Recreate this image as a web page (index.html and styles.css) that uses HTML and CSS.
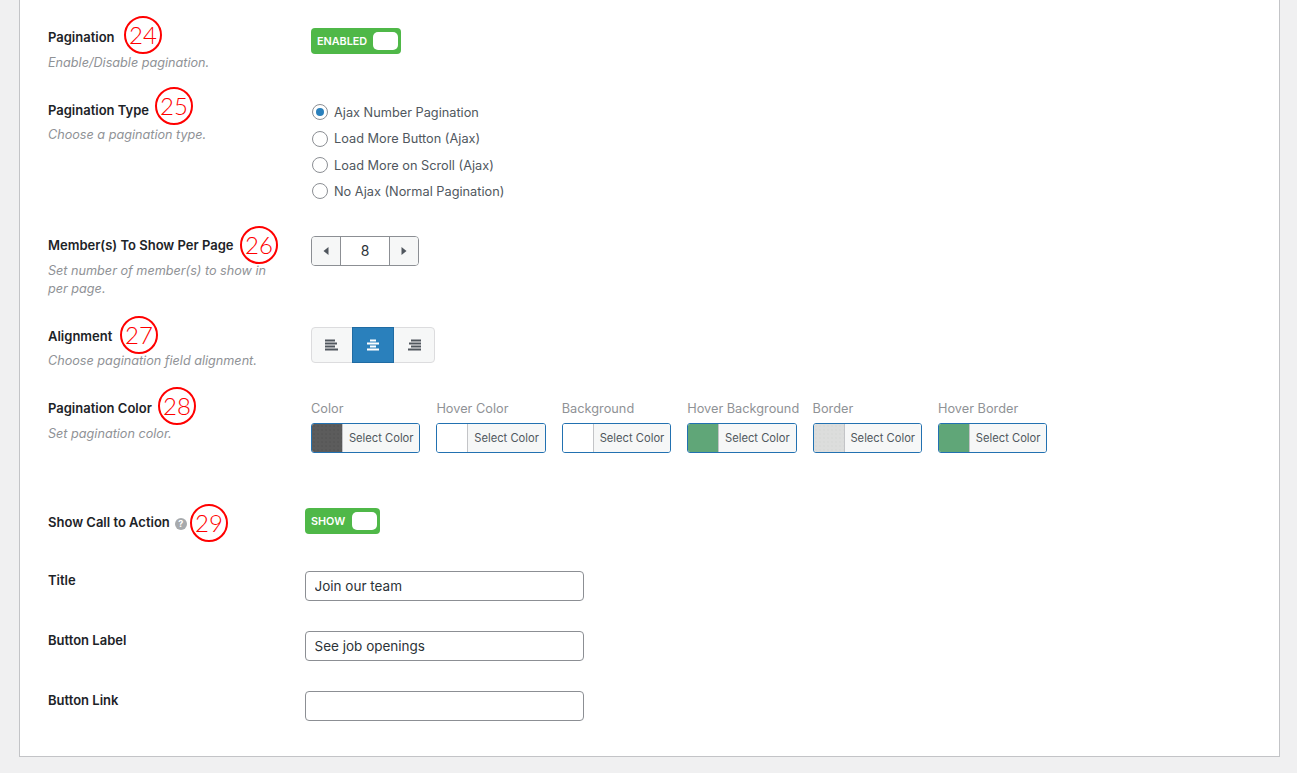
FILE: index.html
```html
<!DOCTYPE html>
<html lang="en">
<head>
<meta charset="utf-8">
<title>Pagination settings</title>
<link rel="stylesheet" href="styles.css">
</head>
<body>
<main class="panel">
  <section class="row row-pagination">
    <div class="info">
      <h3 class="label"><span class="label-text">Pagination<span class="mark mark-24">24</span></span></h3>
      <p class="desc">Enable/Disable pagination.</p>
    </div>
    <div class="control">
      <div class="toggle toggle-enabled"><span class="toggle-text">ENABLED</span><span class="knob"></span></div>
    </div>
  </section>

  <section class="row row-type">
    <div class="info">
      <h3 class="label"><span class="label-text">Pagination Type<span class="mark mark-25">25</span></span></h3>
      <p class="desc">Choose a pagination type.</p>
    </div>
    <div class="control radios">
      <div class="radio-line"><span class="radio radio-on"></span>Ajax Number Pagination</div>
      <div class="radio-line"><span class="radio"></span>Load More Button (Ajax)</div>
      <div class="radio-line"><span class="radio"></span>Load More on Scroll (Ajax)</div>
      <div class="radio-line"><span class="radio"></span>No Ajax (Normal Pagination)</div>
    </div>
  </section>

  <section class="row row-members">
    <div class="info">
      <h3 class="label"><span class="label-text">Member(s) To Show Per Page<span class="mark mark-26">26</span></span></h3>
      <p class="desc">Set number of member(s) to show in per page.</p>
    </div>
    <div class="control">
      <div class="stepper">
        <span class="step"><svg width="6" height="10" viewBox="0 0 6 10"><path d="M5.5 1v8L.5 5z"/></svg></span>
        <span class="step-value">8</span>
        <span class="step"><svg width="6" height="10" viewBox="0 0 6 10"><path d="M.5 1v8l5-4z"/></svg></span>
      </div>
    </div>
  </section>

  <section class="row row-align">
    <div class="info">
      <h3 class="label"><span class="label-text">Alignment<span class="mark mark-27">27</span></span></h3>
      <p class="desc">Choose pagination field alignment.</p>
    </div>
    <div class="control">
      <div class="aligns">
        <span class="align"><svg width="14" height="12" viewBox="0 0 14 12"><path d="M0 1.5h10M0 4.5h12M0 7.5h10M0 10.5h13"/></svg></span>
        <span class="align align-on"><svg width="14" height="12" viewBox="0 0 14 12"><path d="M4 1.5h6M1 4.5h12M4 7.5h6M1 10.5h12"/></svg></span>
        <span class="align"><svg width="14" height="12" viewBox="0 0 14 12"><path d="M4 1.5h10M2 4.5h12M4 7.5h10M1 10.5h13"/></svg></span>
      </div>
    </div>
  </section>

  <section class="row row-color">
    <div class="info">
      <h3 class="label"><span class="label-text">Pagination Color<span class="mark mark-28">28</span></span></h3>
      <p class="desc">Set pagination color.</p>
    </div>
    <div class="control colors">
      <div class="color"><div class="color-name">Color</div><div class="picker"><span class="swatch swatch-dark"></span><span class="pick">Select Color</span></div></div>
      <div class="color"><div class="color-name">Hover Color</div><div class="picker"><span class="swatch"></span><span class="pick">Select Color</span></div></div>
      <div class="color"><div class="color-name">Background</div><div class="picker"><span class="swatch"></span><span class="pick">Select Color</span></div></div>
      <div class="color"><div class="color-name">Hover Background</div><div class="picker"><span class="swatch swatch-green"></span><span class="pick">Select Color</span></div></div>
      <div class="color"><div class="color-name">Border</div><div class="picker"><span class="swatch swatch-grey"></span><span class="pick">Select Color</span></div></div>
      <div class="color"><div class="color-name">Hover Border</div><div class="picker"><span class="swatch swatch-green"></span><span class="pick">Select Color</span></div></div>
    </div>
  </section>

  <section class="row row-cta wide">
    <div class="info">
      <h3 class="label label-cta"><span class="label-text">Show Call to Action<span class="help">?</span><span class="mark mark-29">29</span></span></h3>
    </div>
    <div class="control">
      <div class="toggle toggle-show"><span class="toggle-text">SHOW</span><span class="knob"></span></div>
    </div>
  </section>

  <section class="row row-field wide">
    <div class="info"><h3 class="label">Title</h3></div>
    <div class="control"><input class="field" type="text" value="Join our team"></div>
  </section>
  <section class="row row-field wide">
    <div class="info"><h3 class="label">Button Label</h3></div>
    <div class="control"><input class="field" type="text" value="See job openings"></div>
  </section>
  <section class="row row-field row-last wide">
    <div class="info"><h3 class="label">Button Link</h3></div>
    <div class="control"><input class="field" type="text" value=""></div>
  </section>
</main>
</body>
</html>
```
FILE: styles.css
```css
* { box-sizing: border-box; }
html, body { margin: 0; padding: 0; }
body {
  background: #f0f0f1;
  font-family: Inter, "Liberation Sans", sans-serif;
  color: #1d2327;
  font-size: 13px;
  height: 773px;
  overflow: hidden;
}
.panel {
  margin: 0 17px 0 19px;
  height: 757px;
  background: #fff;
  border: 1px solid #c3c4c7;
  border-top: 0;
  padding: 28px 0 0 28px;
}
.row { display: grid; grid-template-columns: 263px 1fr; }
.row.wide { grid-template-columns: 257px 1fr; }
.row-pagination { height: 73px; }
.row-type { height: 135px; }
.row-members { height: 91px; }
.row-align { height: 72px; }
.row-color { height: 109px; }
.row-cta { height: 63px; }
.row-field { height: 60px; }
.row-last { height: 66px; }

.label { margin: 0; font-size: 13px; line-height: 18px; font-weight: 600; color: #1d2327; }
.label-cta { padding-top: 5px; }
.label-text { position: relative; display: inline-block; }
.desc {
  margin: 7.5px 0 0;
  width: 226px;
  font-size: 12.65px;
  line-height: 18px;
  font-style: italic;
  color: #8f9296;
}
.row-type .desc, .row-align .desc { margin-top: 6.5px; }

.mark {
  position: absolute;
  width: 38px;
  height: 38px;
  border: 2px solid #f00;
  border-radius: 50%;
  background: #fff;
  color: #f00;
  font-family: Lato, sans-serif;
  font-size: 24px;
  font-weight: 300;
  line-height: 34px;
  text-align: center;
}
.mark-24 { left: 76px; top: -12px; }
.mark-25 { left: 107px; top: -14px; }
.mark-26 { left: 192px; top: -10px; }
.mark-27 { left: 72px; top: -11px; }
.mark-28 { left: 110px; top: -12px; }
.mark-29 { left: 142px; top: -9px; }

.help {
  display: inline-block;
  width: 12px;
  height: 12px;
  margin-left: 5px;
  border-radius: 50%;
  background: #a7aaad;
  color: #fff;
  font-size: 9px;
  font-weight: 700;
  line-height: 12px;
  text-align: center;
  vertical-align: 0;
}

.toggle {
  display: flex;
  align-items: center;
  justify-content: space-between;
  height: 26px;
  padding: 0 3px 0 6px;
  border-radius: 4px;
  background: #4fb848;
  color: #fff;
  font-size: 10.8px;
  font-weight: 600;
}
.toggle-enabled { width: 90px; }
.toggle-show { width: 75px; }
.knob { width: 25px; height: 18px; border-radius: 5px; background: #fff; }

.radios { margin-top: -1.7px; }
.radio-line {
  display: flex;
  align-items: center;
  height: 26.33px;
  padding-left: 1px;
  color: #50575e;
  font-size: 12.75px;
}
.radio {
  width: 16px;
  height: 16px;
  margin-right: 6px;
  border: 1px solid #8c8f94;
  border-radius: 50%;
  background: #fff;
  display: flex;
  align-items: center;
  justify-content: center;
}
.radio-on::before {
  content: "";
  width: 8px;
  height: 8px;
  border-radius: 50%;
  background: #2a80bc;
}

.stepper {
  display: flex;
  width: 108px;
  height: 30px;
  border: 1px solid #8c8f94;
  border-radius: 4px;
  overflow: hidden;
}
.step {
  display: flex;
  align-items: center;
  justify-content: center;
  width: 28px;
  background: #f6f7f7;
}
.step svg { fill: #50575e; }
.step-value {
  flex: 1;
  border-left: 1px solid #8c8f94;
  border-right: 1px solid #8c8f94;
  font-size: 14px;
  line-height: 28px;
  text-align: center;
  color: #2c3338;
}

.aligns {
  display: flex;
  width: 124px;
  height: 36px;
  border: 1px solid #dcdcde;
  border-radius: 4px;
  background: #f6f7f7;
}
.align {
  display: flex;
  align-items: center;
  justify-content: center;
  flex: 1;
}
.align svg { fill: none; stroke: #50575e; stroke-width: 1.8; }
.align-on {
  margin: -1px 0;
  background: #2a80bc;
  border: 1px solid #1f6ba3;
}
.align-on svg { stroke: #fff; }

.colors { display: flex; gap: 16px; }
.color { width: 109.4px; }
.color-name { padding-top: 1px; color: #8f9296; font-size: 12.75px; line-height: 18px; white-space: nowrap; }
.picker {
  display: flex;
  height: 30px;
  margin-top: 5px;
  border: 1px solid #2271b1;
  border-radius: 3px;
  overflow: hidden;
}
.swatch { width: 31px; background-color: #fff; border-right: 1px solid #c3c4c7; }
.swatch-dark {
  background-color: #5c5c5c;
  background-image: radial-gradient(circle, #555 0.5px, transparent 1px);
  background-size: 4px 4px;
}
.swatch-green { background-color: #60a678; }
.swatch-grey {
  background-color: #dcdddc;
  background-image: radial-gradient(circle, #d6d7d6 0.5px, transparent 1px);
  background-size: 4px 4px;
}
.pick {
  flex: 1;
  padding-top: 1px;
  background: #f6f7f7;
  color: #50575e;
  font-size: 11.2px;
  line-height: 27px;
  text-align: center;
  white-space: nowrap;
}

.field {
  display: block;
  width: 279px;
  height: 30px;
  padding: 0 8.5px;
  border: 1px solid #8c8f94;
  border-radius: 4px;
  background: #fff;
  color: #2c3338;
  font-family: Inter, "Liberation Sans", sans-serif;
  font-size: 13.5px;
}
```
